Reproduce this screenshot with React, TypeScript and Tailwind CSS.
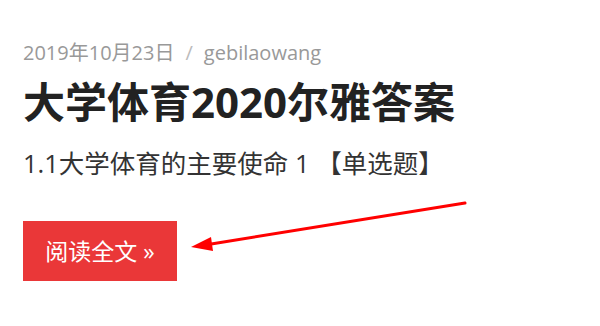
export default function App() {
  return (
    <div className="relative h-[326px] w-[600px] overflow-hidden bg-white font-['Open_Sans','Noto_Sans_CJK_SC',sans-serif]">
      <div className="pl-[23px] pt-[39px]">
        <div className="flex items-center text-[20px] leading-[28px] text-[#999]">
          <span>2019年10月23日</span>
          <span className="mx-[11px] text-[#bbb]">/</span>
          <span>gebilaowang</span>
        </div>
        <h1 className="mt-[10px] text-[42px] font-bold leading-[50px] text-[#222]">大学体育2020尔雅答案</h1>
        <p className="mt-[19px] text-[25.5px] leading-[34px] text-[#333]">1.1大学体育的主要使命 1 【单选题】</p>
        <button className="mt-[41px] flex h-[60px] w-[154px] items-center justify-center bg-[#ea3738] text-[23px] text-white">
          阅读全文 »
        </button>
      </div>
      <svg className="absolute left-0 top-0" width="600" height="326" viewBox="0 0 600 326">
        <line x1="465" y1="203" x2="205" y2="245" stroke="#f00" strokeWidth="3" strokeLinecap="round" />
        <polygon points="191,247 211,237 213,251" fill="#f00" />
      </svg>
    </div>
  );
}
